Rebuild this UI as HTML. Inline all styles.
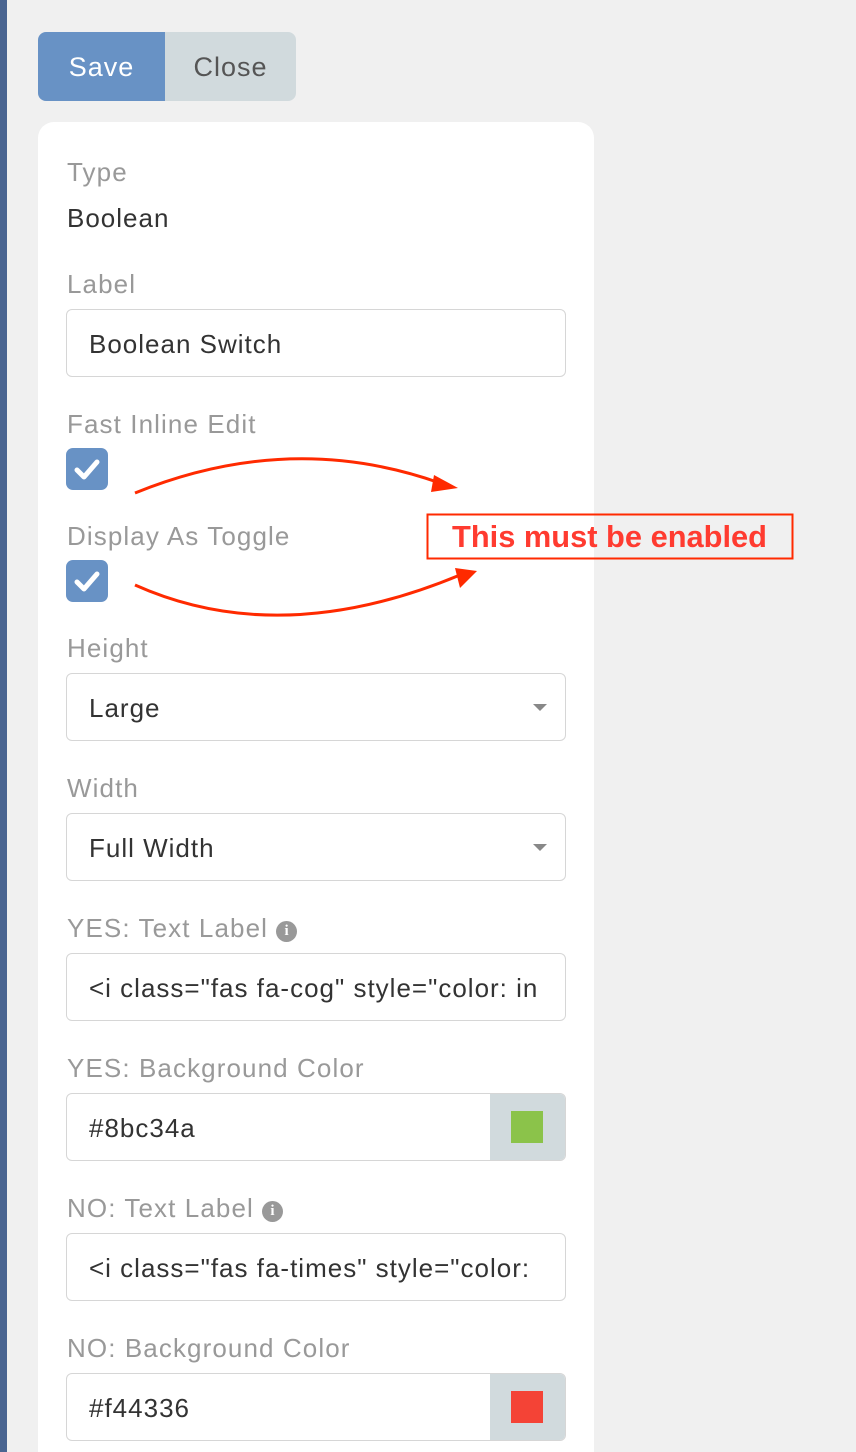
<!DOCTYPE html>
<html style="overflow:hidden"><head><style>
html,body{margin:0;width:856px;height:1452px;overflow:hidden}
body{background:#f0f0f0;font-family:"Liberation Sans","DejaVu Sans",sans-serif;position:relative}
.bar{position:absolute;left:0;top:0;width:7px;height:1452px;background:#4a6591}
.btn{position:absolute;top:32px;height:69px;line-height:71px;font-size:27px;text-align:center;letter-spacing:1px}
.card{position:absolute;left:38px;top:122px;width:556px;height:1330px;background:#fff;border-radius:16px 16px 0 0}
.lbl{position:absolute;left:67px;font-size:26px;color:#999;line-height:30px;letter-spacing:1.1px;white-space:nowrap}
.val{position:absolute;left:67px;font-size:26px;color:#333;line-height:30px;letter-spacing:1px}
.inp{position:absolute;left:66px;width:498px;height:66px;border:1px solid #d6d6d6;border-radius:6px;background:#fff;font-size:26px;color:#333;line-height:68px;box-sizing:content-box;overflow:hidden;white-space:nowrap;letter-spacing:1px}
.inp span{position:absolute;left:22px}
.cb{position:absolute;left:66px;width:42px;height:42px;border-radius:7px;background:#6892c5}
.car{position:absolute;right:18px;top:30px;border-left:7px solid transparent;border-right:7px solid transparent;border-top:7px solid #888}
.add{position:absolute;right:0;top:0;width:75px;height:66px;background:#d1dadd}
.sw{position:absolute;left:21px;top:17px;width:32px;height:32px}
.info{display:inline-block;width:21px;height:21px;border-radius:50%;background:#999;color:#fff;font-size:15px;line-height:21px;text-align:center;font-weight:bold;font-family:"Liberation Serif",serif;vertical-align:2px;margin-left:8px;letter-spacing:0}
</style></head><body>
<div class="bar"></div>
<div class="btn" style="left:38px;width:127px;background:#6892c5;color:#fff;border-radius:8px 0 0 8px">Save</div>
<div class="btn" style="left:165px;width:131px;background:#d1dadd;color:#555;border-radius:0 8px 8px 0">Close</div>
<div class="card"></div>
<div class="lbl" style="top:157px">Type</div>
<div class="val" style="top:203px">Boolean</div>
<div class="lbl" style="top:269px">Label</div>
<div class="inp" style="top:309px"><span>Boolean Switch</span></div>
<div class="lbl" style="top:409px">Fast Inline Edit</div>
<div class="cb" style="top:448px"><svg width="42" height="42"><path d="M11 22l7 7 13-15" stroke="#fff" stroke-width="5" fill="none" stroke-linecap="round" stroke-linejoin="round"/></svg></div>
<div class="lbl" style="top:521px">Display As Toggle</div>
<div class="cb" style="top:560px"><svg width="42" height="42"><path d="M11 22l7 7 13-15" stroke="#fff" stroke-width="5" fill="none" stroke-linecap="round" stroke-linejoin="round"/></svg></div>
<div class="lbl" style="top:633px">Height</div>
<div class="inp" style="top:673px"><span>Large</span><div class="car"></div></div>
<div class="lbl" style="top:773px">Width</div>
<div class="inp" style="top:813px"><span>Full Width</span><div class="car"></div></div>
<div class="lbl" style="top:913px">YES: Text Label<span class="info">i</span></div>
<div class="inp" style="top:953px"><span>&lt;i class="fas fa-cog" style="color: in</span></div>
<div class="lbl" style="top:1053px">YES: Background Color</div>
<div class="inp" style="top:1093px"><span>#8bc34a</span><div class="add"><div class="sw" style="background:#8bc34a"></div></div></div>
<div class="lbl" style="top:1193px">NO: Text Label<span class="info">i</span></div>
<div class="inp" style="top:1233px"><span>&lt;i class="fas fa-times" style="color:</span></div>
<div class="lbl" style="top:1333px">NO: Background Color</div>
<div class="inp" style="top:1373px"><span>#f44336</span><div class="add"><div class="sw" style="background:#f44336"></div></div></div>
<svg style="position:absolute;left:0;top:0" width="856" height="1452">
<path d="M135 493 Q290 430 440 483" stroke="#ff2a00" stroke-width="3" fill="none"/>
<path d="M434 475 L458 488 L431 492 Z" fill="#ff2a00"/>
<path d="M135 585 Q280 650 460 575" stroke="#ff2a00" stroke-width="3" fill="none"/>
<path d="M455 568 L477 571 L460 588 Z" fill="#ff2a00"/>
<rect x="427.5" y="514.5" width="365" height="44" fill="none" stroke="#ff2a00" stroke-width="2"/>
<text x="452" y="547" textLength="315" lengthAdjust="spacingAndGlyphs" font-family="Liberation Sans,sans-serif" font-weight="bold" font-size="31" fill="#ff3b30">This must be enabled</text>
</svg>
</body></html>
